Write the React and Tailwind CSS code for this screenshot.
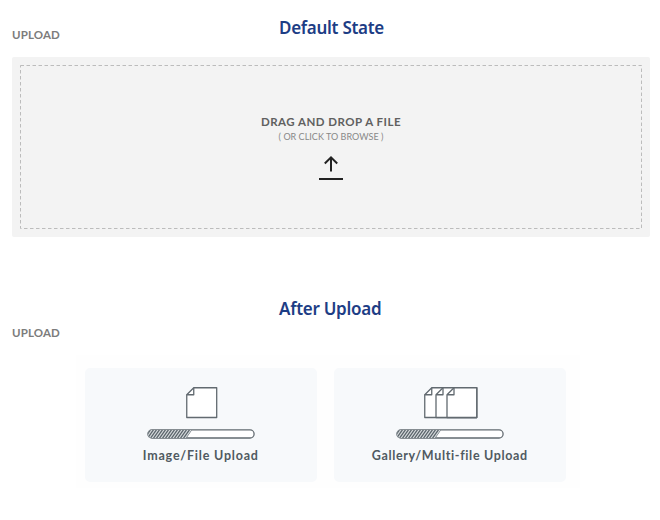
const uploadLabel =
  "h-4 whitespace-nowrap font-['Lato',sans-serif] text-[11.5px] leading-4 font-bold tracking-[0.15px] text-[#7c7c7c]";
const stateTitle =
  "h-6 whitespace-nowrap font-['Noto_Sans',sans-serif] text-[17px] leading-6 font-semibold tracking-[-0.28px] text-[#1d3d85]";

function ArrowUp() {
  return (
    <svg className="mt-[10px] h-7 w-6" viewBox="0 0 24 28" fill="none" stroke="#222" strokeWidth="2">
      <path d="M12 17.5V3.5M5.8 9.5L12 3.3L18.2 9.5" />
      <path d="M0 25H24" />
    </svg>
  );
}

function Page({ x, width }) {
  return (
    <g>
      <path d={`M${x + 7} .75H${x + width}V30.5H${x}V7.75Z`} fill="#fff" />
      <path d={`M${x + 7} .75V7.75H${x}`} />
    </g>
  );
}

function Files({ multiple }) {
  const pages = multiple ? [0.75, 12, 23] : [0.75];
  const right = multiple ? 52.7 : 30.7;
  return (
    <svg className="ml-[1.5px]" width={right + 1.3} height="32" viewBox={`0 0 ${right + 1.3} 32`} fill="none" stroke="#626a70" strokeWidth="1.3" strokeLinejoin="round">
      {pages.map((x) => (
        <Page key={x} x={x} width={right - x} />
      ))}
    </svg>
  );
}

function Progress({ id }) {
  return (
    <svg className="mt-[9.5px] ml-[1px] h-[10px] w-[109px]" viewBox="0 0 109 10" fill="none">
      <clipPath id={id}>
        <path d="M5 .9H45L39.5 9H5A4.05 4.05 0 0 1 5 .9Z" />
      </clipPath>
      <rect x=".9" y=".9" width="106.2" height="8.1" rx="4.05" fill="#fff" stroke="#626a70" strokeWidth="1.3" />
      <g clipPath={`url(#${id})`}>
        <rect width="46" height="10" fill="#d5d9db" />
        {Array.from({ length: 18 }, (_, i) => (
          <path key={i} d={`M${i * 3 - 6} 10L${i * 3 + 1} 0`} stroke="#59636a" strokeWidth="1.25" />
        ))}
      </g>
    </svg>
  );
}

function Card({ label, id, multiple, labelClass }) {
  return (
    <div className="flex h-[114.5px] w-[231.5px] flex-col items-center rounded-[5px] bg-[#f7f9fb] pt-[19.5px]">
      <Files multiple={multiple} />
      <Progress id={id} />
      <div className={`mt-[9.5px] h-4 whitespace-nowrap font-['Lato',sans-serif] text-[12.5px] leading-4 font-bold text-[#505a61] ${labelClass}`}>
        {label}
      </div>
    </div>
  );
}

export default function App() {
  return (
    <main className="h-[520px] w-[660px] overflow-hidden bg-white">
      <div className="grid h-[57px] grid-cols-[267px_1fr] pl-3">
        <div className={`mt-[27px] ${uploadLabel}`}>UPLOAD</div>
        <h1 className={`mt-[16px] ${stateTitle}`}>Default State</h1>
      </div>
      <section className="ml-3 grid h-[180px] w-[638px] rounded-[2px] bg-[#f3f3f3]">
        <svg className="col-start-1 row-start-1" width="638" height="180" fill="none">
          <rect x="8.5" y="8.5" width="621" height="163" stroke="#bcbcbc" strokeDasharray="3.5 2.5" />
        </svg>
        <div className="col-start-1 row-start-1 flex flex-col items-center pt-[57px]">
          <div className="h-4 whitespace-nowrap font-['Lato',sans-serif] text-[11.5px] leading-4 font-bold tracking-[0.48px] text-[#606060]">DRAG AND DROP A FILE</div>
          <div className="h-[14px] whitespace-nowrap font-['Lato',sans-serif] text-[9px] leading-[14px] tracking-[0.03px] text-[#888]">( OR CLICK TO BROWSE )</div>
          <ArrowUp />
        </div>
      </section>
      <div className="grid h-[118px] grid-cols-[267px_1fr] pl-3">
        <div className={`mt-[88px] ${uploadLabel}`}>UPLOAD</div>
        <h2 className={`mt-[60px] ${stateTitle}`}>After Upload</h2>
      </div>
      <section className="ml-[76px] flex h-[133px] w-[504px] gap-[17.5px] bg-[#fefefe] pt-[12.5px] pl-[9px]">
        <Card label="Image/File Upload" id="single-progress" labelClass="tracking-[0.8px]" />
        <Card label="Gallery/Multi-file Upload" id="gallery-progress" multiple labelClass="tracking-[0.66px]" />
      </section>
    </main>
  );
}
